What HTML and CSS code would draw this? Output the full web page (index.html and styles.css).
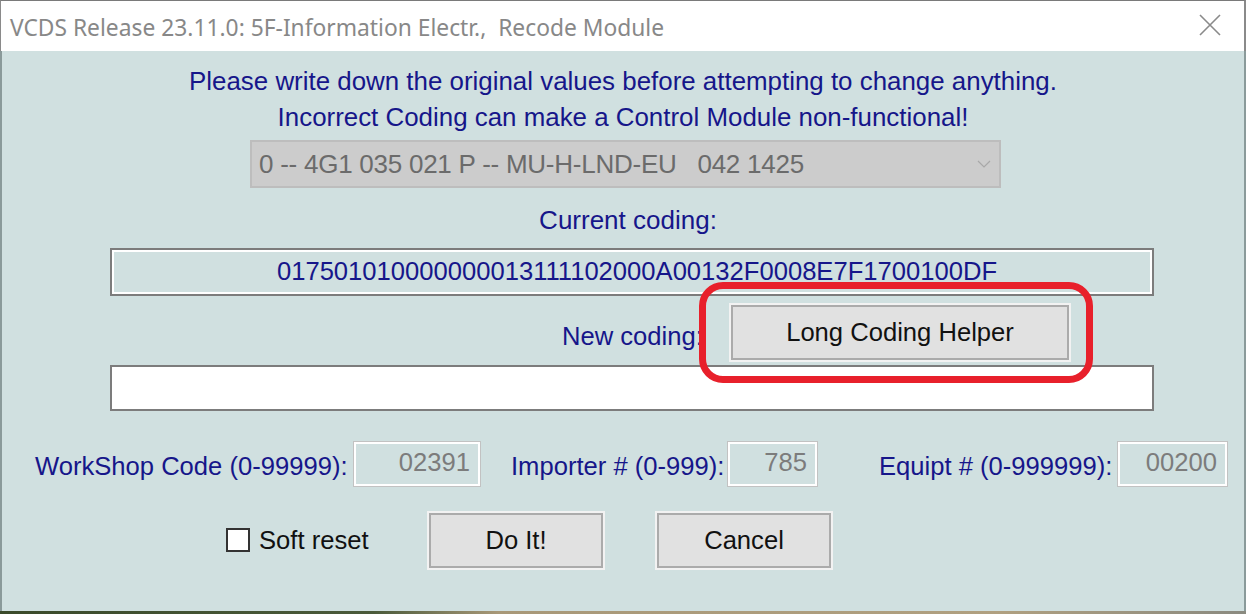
FILE: index.html
```html
<!DOCTYPE html>
<html>
<head>
<meta charset="utf-8">
<link rel="stylesheet" href="styles.css">
</head>
<body>
<div class="window">
  <div class="titlebar">
    <span class="title">VCDS Release 23.11.0: 5F-Information Electr.,&nbsp; Recode Module</span>
    <svg class="close" width="24" height="24" viewBox="0 0 24 24"><path d="M2 2 L22 22 M22 2 L2 22" stroke="#8a8a8a" stroke-width="1.6" fill="none"/></svg>
  </div>
  <div class="client">
    <div class="warn">Please write down the original values before attempting to change anything.</div>
    <div class="warn">Incorrect Coding can make a Control Module non-functional!</div>
    <div class="combo">
      <span class="combo-text">0 -- 4G1 035 021 P -- MU-H-LND-EU&nbsp;&nbsp; 042 1425</span>
      <svg class="chev" width="14" height="8" viewBox="0 0 14 8"><path d="M1 1 L7 7 L13 1" stroke="#a8a8a8" stroke-width="1.2" fill="none"/></svg>
    </div>
    <div class="label-center">Current coding:</div>
    <div class="codebox current">017501010000000013111102000A00132F0008E7F1700100DF</div>
    <div class="newrow">
      <span class="newlabel">New coding:</span>
      <button class="btn helper">Long Coding Helper</button>
      <div class="annot"></div>
    </div>
    <div class="codebox newbox"></div>
    <div class="fields">
      <span class="flabel wlabel">WorkShop Code (0-99999):</span>
      <span class="field f1">02391</span>
      <span class="flabel ilabel">Importer # (0-999):</span>
      <span class="field f2">785</span>
      <span class="flabel elabel">Equipt # (0-999999):</span>
      <span class="field f3">00200</span>
    </div>
    <div class="actions">
      <label class="check"><span class="box"></span><span>Soft reset</span></label>
      <button class="btn action doit">Do It!</button>
      <button class="btn action">Cancel</button>
    </div>
  </div>
  <div class="desktop"></div>
</div>
</body>
</html>
```
FILE: styles.css
```css
* { box-sizing: border-box; }
html, body { margin: 0; padding: 0; }
body { width: 1246px; height: 614px; overflow: hidden; background: #6b6a52; }
.window {
  width: 1246px; height: 614px;
  display: flex; flex-direction: column;
}
.titlebar {
  height: 51px; flex: none;
  background: #ffffff;
  border-top: 1px solid #7a7a7a;
  border-left: 1px solid #8a8a8a;
  border-right: 2px solid #8a8a8a;
  display: flex; align-items: center;
  padding-left: 9px; padding-right: 22px;
}
.title {
  font-family: "Noto Sans", "Open Sans", sans-serif;
  font-size: 22.8px; color: #888888;
  flex: 1; white-space: nowrap;
  padding-top: 3px;
}
.close { flex: none; margin-top: -2px; }
.client {
  flex: 1;
  background: #d0e0e0;
  border-left: 2px solid #8a9a9a;
  border-right: 2px solid #8a9a9a;
  display: flex; flex-direction: column;
  font-family: "Liberation Sans", Arial, sans-serif;
  font-size: 25.6px; color: #16168a;
  padding-top: 12px;
}
.warn { text-align: center; line-height: 36px; height: 36px; font-size: 25.9px; }
.combo {
  margin: 5px 0 0 248px;
  width: 751px; height: 48px;
  background: #cccccc;
  border: 2px solid #bdbdbd;
  display: flex; align-items: center; justify-content: space-between;
  padding: 0 8px 0 7px;
}
.combo-text { color: #6b6b6b; font-size: 26px; letter-spacing: -0.25px; }
.label-center { text-align: center; margin-top: 14px; line-height: 36px; font-size: 26px; padding-left: 10px; }
.codebox {
  margin-left: 108px; width: 1044px;
  border: 2px solid #7c7c7c;
}
.current {
  margin-top: 10px; height: 48px;
  box-shadow: inset 0 0 0 2px #ffffff;
  text-align: center; line-height: 42px;
  padding-left: 10px;
}
.newrow {
  position: relative;
  margin-top: 9px; height: 55px;
  display: flex; align-items: center;
}
.newlabel { margin-left: 560px; width: 169px; padding-top: 8px; }
.btn {
  font-family: "Liberation Sans", Arial, sans-serif;
  font-size: 25.6px; color: #111111;
  background: #e1e1e1;
  border: 2px solid #ababab;
  box-shadow: 0 0 0 2px #f2f2f2;
  padding: 0;
}
.helper { width: 338px; height: 55px; margin-left: 0; }
.annot {
  position: absolute;
  left: 697px; top: -23px;
  width: 394px; height: 101px;
  border: 7px solid #e8202b;
  border-radius: 24px;
}
.newbox { margin-top: 5px; height: 46px; background: #ffffff; }
.fields {
  margin-top: 30px; height: 46px;
  display: flex; align-items: center;
}
.flabel { white-space: nowrap; padding-top: 4px; }
.wlabel { margin-left: 33px; width: 318px; }
.ilabel { margin-left: 30px; width: 216px; }
.elabel { margin-left: 61px; width: 237px; }
.field {
  height: 46px;
  border: 1px solid #c2c2c2;
  box-shadow: inset 0 0 0 2px #ffffff;
  color: #7c7c7c; text-align: right;
  line-height: 40px; padding-right: 10px;
}
.f1 { width: 128px; }
.f2 { width: 91px; }
.f3 { width: 111px; margin-left: 1px; }
.actions {
  margin-top: 25px; height: 56px;
  display: flex; align-items: center;
}
.check { display: flex; align-items: center; margin-left: 224px; color: #111111; width: 203px; }
.box { width: 24px; height: 24px; background: #ffffff; border: 2px solid #333333; margin-right: 9px; }
.action { width: 174px; height: 55px; }
.doit { margin-right: 54px; }
.desktop {
  height: 3px; flex: none;
  background: linear-gradient(90deg, #3a4a2a 0%, #4a5a3a 30%, #a89878 40%, #b0a080 80%, #8a8a80 100%);
}
```
